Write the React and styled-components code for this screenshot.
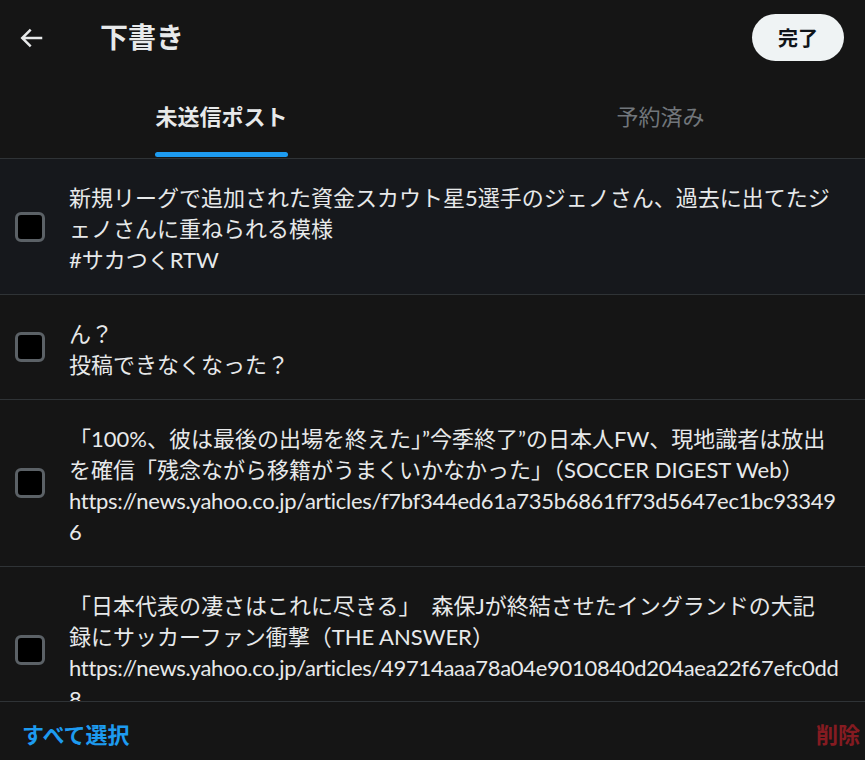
import React from 'react';
import styled, { createGlobalStyle } from 'styled-components';

const GlobalStyle = createGlobalStyle`
  html, body { margin: 0; padding: 0; background: #151515; }
  body { font-family: Lato, "Noto Sans CJK JP", sans-serif; color: #e7e9ea; }
  * { box-sizing: border-box; }
`;

const Page = styled.div`
  width: 865px;
  height: 760px;
  display: flex;
  flex-direction: column;
  background: #151515;
  overflow: hidden;
`;

const Header = styled.header`
  height: 76px;
  flex: none;
  display: flex;
  align-items: center;
  padding: 0 21px 0 16px;
`;

const BackButton = styled.button`
  width: 84px;
  height: 40px;
  padding: 0;
  border: none;
  background: none;
  color: #e7e9ea;
  display: flex;
  align-items: center;
  svg { width: 30px; height: 30px; display: block; }
`;

const Title = styled.h1`
  margin: -4px 0 0;
  flex: 1;
  font-size: 28px;
  font-weight: 700;
  line-height: 1;
  font-family: "Noto Sans CJK JP", sans-serif;
  color: #e7e9ea;
`;

const DoneButton = styled.button`
  width: 92px;
  height: 47px;
  border: none;
  border-radius: 24px;
  background: #eff3f4;
  color: #0f1419;
  font-family: "Noto Sans CJK JP", sans-serif;
  font-size: 20px;
  font-weight: 700;
  display: flex;
  align-items: center;
  justify-content: center;
  margin-top: -1px;
`;

const TabsWrap = styled.div`
  flex: none;
  overflow: hidden;
  border-bottom: 1px solid #2f3336;
`;

const Tabs = styled.nav`
  height: 82px;
  display: flex;
  width: calc(100% + 15px);
  padding-left: 2px;
`;

const Tab = styled.div`
  flex: 1;
  display: flex;
  justify-content: center;
  align-items: flex-end;
  padding-bottom: 1px;
`;

const TabInner = styled.div`
  display: flex;
  flex-direction: column;
  align-items: stretch;
`;

const TabLabel = styled.span`
  font-family: "Noto Sans CJK JP", sans-serif;
  font-size: 22px;
  line-height: 22px;
  font-weight: ${p => (p.$active ? 700 : 400)};
  color: ${p => (p.$active ? '#e7e9ea' : '#71767b')};
  margin-bottom: 26px;
  white-space: nowrap;
`;

const Indicator = styled.span`
  height: 5px;
  border-radius: 3px;
  background: ${p => (p.$active ? '#1d9bf0' : 'transparent')};
`;

const List = styled.div`
  flex: 1;
  overflow: hidden;
`;

const Item = styled.div`
  display: flex;
  align-items: center;
  gap: 24px;
  padding: 21px 20px 21px 15px;
  border-bottom: 1px solid #2f3336;
  background: ${p => (p.$selected ? '#16181c' : 'transparent')};
`;

const CheckBox = styled.span`
  flex: none;
  width: 30px;
  height: 30px;
  border: 3px solid #5b6166;
  border-radius: 6px;
  background: #000;
`;

const Text = styled.div`
  flex: 1;
  min-width: 0;
  font-size: 22px;
  line-height: 31px;
  color: #e7e9ea;
  white-space: nowrap;
  overflow: hidden;
  padding-top: 2px;
  margin-bottom: -2px;
`;

const Line = styled.div`
  letter-spacing: ${p => (p.$url ? '-0.3px' : 'normal')};
`;

const Footer = styled.footer`
  height: 59px;
  flex: none;
  border-top: 1px solid #2f3336;
  display: flex;
  align-items: center;
  justify-content: space-between;
  padding: 4px 5px 0 22px;
`;

const FooterAction = styled.button`
  border: none;
  background: none;
  padding: 0;
  font-family: "Noto Sans CJK JP", sans-serif;
  font-size: 22px;
  font-weight: 700;
  color: ${p => (p.$danger ? '#f4212e' : '#1d9bf0')};
  opacity: ${p => (p.$danger ? 0.5 : 1)};
`;

const drafts = [
  {
    selected: true,
    lines: [
      '新規リーグで追加された資金スカウト星5選手のジェノさん、過去に出てたジ',
      'ェノさんに重ねられる模様',
      '#サカつくRTW',
    ],
  },
  {
    lines: ['ん？', '投稿できなくなった？'],
  },
  {
    lines: [
      '「100%、彼は最後の出場を終えた」”今季終了”の日本人FW、現地識者は放出',
      'を確信「残念ながら移籍がうまくいかなかった」（SOCCER DIGEST Web）',
      'https://news.yahoo.co.jp/articles/f7bf344ed61a735b6861ff73d5647ec1bc93349',
      '6',
    ],
  },
  {
    lines: [
      '「日本代表の凄さはこれに尽きる」　森保Jが終結させたイングランドの大記',
      '録にサッカーファン衝撃（THE ANSWER）',
      'https://news.yahoo.co.jp/articles/49714aaa78a04e9010840d204aea22f67efc0dd',
      '8',
    ],
  },
];

export default function App() {
  return (
    <>
      <GlobalStyle />
      <Page>
        <Header>
          <BackButton aria-label="戻る">
            <svg viewBox="0 0 24 24" fill="currentColor">
              <path d="M7.414 13l5.043 5.04-1.414 1.42L3.586 12l7.457-7.46 1.414 1.42L7.414 11H21v2H7.414z" />
            </svg>
          </BackButton>
          <Title>下書き</Title>
          <DoneButton>完了</DoneButton>
        </Header>
        <TabsWrap>
          <Tabs>
            <Tab>
              <TabInner>
                <TabLabel $active>未送信ポスト</TabLabel>
                <Indicator $active />
              </TabInner>
            </Tab>
            <Tab>
              <TabInner>
                <TabLabel>予約済み</TabLabel>
                <Indicator />
              </TabInner>
            </Tab>
          </Tabs>
        </TabsWrap>
        <List>
          {drafts.map((d, i) => (
            <Item key={i} $selected={d.selected}>
              <CheckBox />
              <Text>
                {d.lines.map((l, j) => (
                  <Line key={j} $url={l.startsWith('https://')}>{l}</Line>
                ))}
              </Text>
            </Item>
          ))}
        </List>
        <Footer>
          <FooterAction>すべて選択</FooterAction>
          <FooterAction $danger>削除</FooterAction>
        </Footer>
      </Page>
    </>
  );
}
